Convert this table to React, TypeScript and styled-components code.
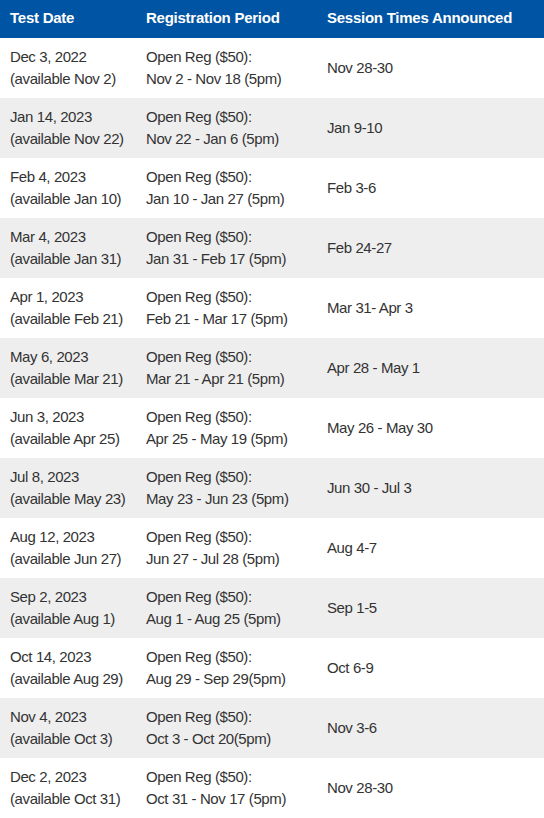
import React from "react";
import styled, { createGlobalStyle } from "styled-components";

const Global = createGlobalStyle`
  html, body { margin: 0; padding: 0; background: #fff; }
  body { font-family: Arial, "Liberation Sans", sans-serif; }
`;

const Table = styled.table`
  width: 544px;
  border-collapse: collapse;
  table-layout: fixed;
  font-family: Arial, "Liberation Sans", sans-serif;
  font-size: 15px;
  color: #333;
`;

const HeadCell = styled.th<{ $w: number }>`
  width: ${(p) => p.$w}px;
  height: 38px;
  box-sizing: border-box;
  padding: 0 10px 2px 10px;
  background: #0054a4;
  color: #fff;
  font-weight: bold;
  text-align: left;
  vertical-align: middle;
  line-height: 18px;
  letter-spacing: -0.25px;
  white-space: nowrap;
`;

const Row = styled.tr<{ $alt: boolean }>`
  background: ${(p) => (p.$alt ? "#eeeeee" : "#ffffff")};
  height: 60px;
`;

const Cell = styled.td`
  box-sizing: border-box;
  padding: 8px 10px;
  line-height: 22px;
  vertical-align: middle;
  white-space: nowrap;
  letter-spacing: -0.4px;
`;

const rows: [string, string, string, string, string][] = [
  ["Dec 3, 2022", "(available Nov 2)", "Open Reg ($50):", "Nov 2 - Nov 18 (5pm)", "Nov 28-30"],
  ["Jan 14, 2023", "(available Nov 22)", "Open Reg ($50):", "Nov 22 - Jan 6 (5pm)", "Jan 9-10"],
  ["Feb 4, 2023", "(available Jan 10)", "Open Reg ($50):", "Jan 10 - Jan 27 (5pm)", "Feb 3-6"],
  ["Mar 4, 2023", "(available Jan 31)", "Open Reg ($50):", "Jan 31 - Feb 17 (5pm)", "Feb 24-27"],
  ["Apr 1, 2023", "(available Feb 21)", "Open Reg ($50):", "Feb 21 - Mar 17 (5pm)", "Mar 31- Apr 3"],
  ["May 6, 2023", "(available Mar 21)", "Open Reg ($50):", "Mar 21 - Apr 21 (5pm)", "Apr 28 - May 1"],
  ["Jun 3, 2023", "(available Apr 25)", "Open Reg ($50):", "Apr 25 - May 19 (5pm)", "May 26 - May 30"],
  ["Jul 8, 2023", "(available May 23)", "Open Reg ($50):", "May 23 - Jun 23 (5pm)", "Jun 30 - Jul 3"],
  ["Aug 12, 2023", "(available Jun 27)", "Open Reg ($50):", "Jun 27 - Jul 28 (5pm)", "Aug 4-7"],
  ["Sep 2, 2023", "(available Aug 1)", "Open Reg ($50):", "Aug 1 - Aug 25 (5pm)", "Sep 1-5"],
  ["Oct 14, 2023", "(available Aug 29)", "Open Reg ($50):", "Aug 29 - Sep 29(5pm)", "Oct 6-9"],
  ["Nov 4, 2023", "(available Oct 3)", "Open Reg ($50):", "Oct 3 - Oct 20(5pm)", "Nov 3-6"],
  ["Dec 2, 2023", "(available Oct 31)", "Open Reg ($50):", "Oct 31 - Nov 17 (5pm)", "Nov 28-30"],
];

export default function App() {
  return (
    <>
      <Global />
      <Table>
        <thead>
          <tr>
            <HeadCell $w={136}>Test Date</HeadCell>
            <HeadCell $w={181}>Registration Period</HeadCell>
            <HeadCell $w={227}>Session Times Announced</HeadCell>
          </tr>
        </thead>
        <tbody>
          {rows.map((r, i) => (
            <Row key={i} $alt={i % 2 === 1}>
              <Cell>
                {r[0]}
                <br />
                {r[1]}
              </Cell>
              <Cell>
                {r[2]}
                <br />
                {r[3]}
              </Cell>
              <Cell>{r[4]}</Cell>
            </Row>
          ))}
        </tbody>
      </Table>
    </>
  );
}
